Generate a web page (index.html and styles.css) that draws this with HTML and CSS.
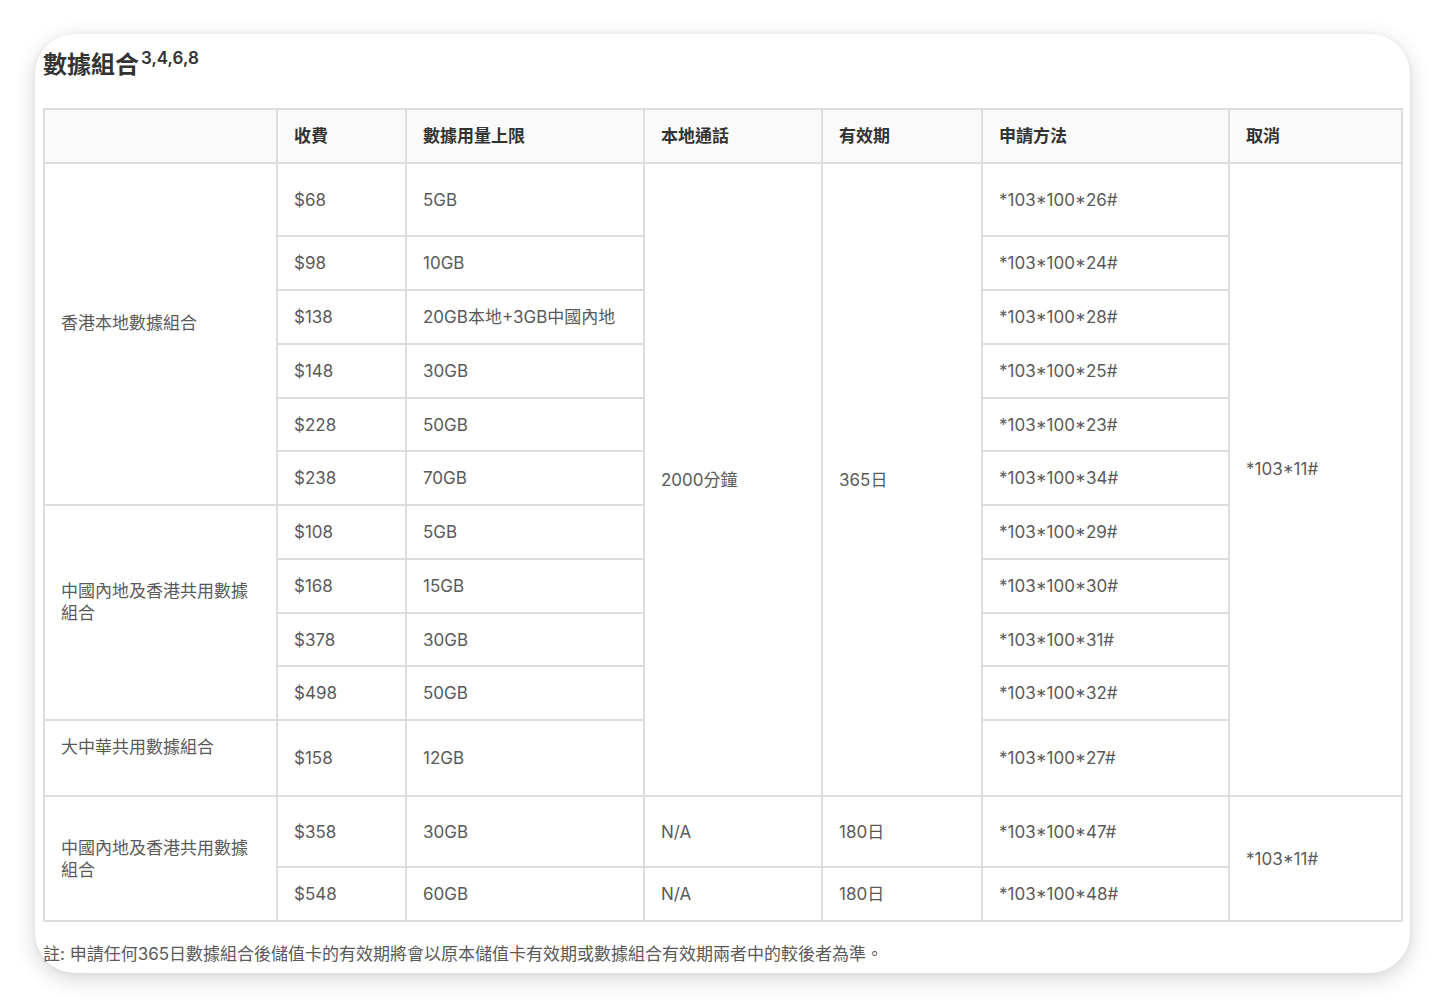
FILE: index.html
```html
<!DOCTYPE html>
<html lang="zh-Hant">
<head>
<meta charset="utf-8">
<title>數據組合</title>
<link rel="stylesheet" href="styles.css">
</head>
<body>
<div class="card">
  <h2 class="title">數據組合<sup>3,4,6,8</sup></h2>
  <table class="plans">
    <colgroup>
      <col class="c1"><col class="c2"><col class="c3"><col class="c4"><col class="c5"><col class="c6"><col class="c7">
    </colgroup>
    <thead>
      <tr class="h54">
        <th></th><th>收費</th><th>數據用量上限</th><th>本地通話</th><th>有效期</th><th>申請方法</th><th>取消</th>
      </tr>
    </thead>
    <tbody>
      <tr class="h73">
        <td rowspan="6" class="lift">香港本地數據組合</td>
        <td>$68</td><td>5GB</td>
        <td rowspan="11">2000分鐘</td>
        <td rowspan="11">365日</td>
        <td>*103*100*26#</td>
        <td rowspan="11" class="lift">*103*11#</td>
      </tr>
      <tr class="h54"><td>$98</td><td>10GB</td><td>*103*100*24#</td></tr>
      <tr class="h54"><td>$138</td><td>20GB本地+3GB中國內地</td><td>*103*100*28#</td></tr>
      <tr class="h54"><td>$148</td><td>30GB</td><td>*103*100*25#</td></tr>
      <tr class="h53"><td>$228</td><td>50GB</td><td>*103*100*23#</td></tr>
      <tr class="h54"><td>$238</td><td>70GB</td><td>*103*100*34#</td></tr>
      <tr class="h54">
        <td rowspan="4" class="lift">中國內地及香港共用數據組合</td>
        <td>$108</td><td>5GB</td><td>*103*100*29#</td>
      </tr>
      <tr class="h54"><td>$168</td><td>15GB</td><td>*103*100*30#</td></tr>
      <tr class="h53"><td>$378</td><td>30GB</td><td>*103*100*31#</td></tr>
      <tr class="h54"><td>$498</td><td>50GB</td><td>*103*100*32#</td></tr>
      <tr class="h76">
        <td class="lift">大中華共用數據組合</td>
        <td>$158</td><td>12GB</td><td>*103*100*27#</td>
      </tr>
      <tr class="h71">
        <td rowspan="2">中國內地及香港共用數據組合</td>
        <td>$358</td><td>30GB</td><td>N/A</td><td>180日</td><td>*103*100*47#</td>
        <td rowspan="2">*103*11#</td>
      </tr>
      <tr class="h54"><td>$548</td><td>60GB</td><td>N/A</td><td>180日</td><td>*103*100*48#</td></tr>
    </tbody>
  </table>
  <p class="note">註: 申請任何365日數據組合後儲值卡的有效期將會以原本儲值卡有效期或數據組合有效期兩者中的較後者為準。</p>
</div>
</body>
</html>
```
FILE: styles.css
```css
html, body {
  margin: 0;
  padding: 0;
  background: #ffffff;
}
body {
  font-family: "Inter", "Noto Sans CJK TC", sans-serif;
  color: #5a5a5a;
  width: 1445px;
  height: 1008px;
  overflow: hidden;
}
.card {
  box-sizing: border-box;
  margin: 34px 0 0 35px;
  width: 1375px;
  height: 939px;
  padding: 15px 8px 0 8px;
  background: #ffffff;
  border-radius: 40px;
  box-shadow: 0 6px 22px rgba(0, 0, 0, 0.16), 0 0 6px rgba(0, 0, 0, 0.06);
}
.title {
  margin: 0;
  font-size: 24px;
  line-height: 32px;
  font-weight: 700;
  color: #333333;
}
.title sup {
  font-size: 17px;
  font-weight: 600;
  vertical-align: 9px;
  line-height: 0;
  margin-left: 2px;
}
.plans {
  margin-top: 27px;
  width: 1358px;
  table-layout: fixed;
  border-collapse: collapse;
  font-size: 17px;
  line-height: 22px;
}
.c1 { width: 233px; }
.c2 { width: 129px; }
.c3 { width: 238px; }
.c4 { width: 178px; }
.c5 { width: 160px; }
.c6 { width: 247px; }
.c7 { width: 173px; }
.plans th,
.plans td {
  border: 2px solid #dddddd;
  padding: 0 16px;
  text-align: left;
  vertical-align: middle;
}
.plans th {
  background: #fafafa;
  color: #333333;
  font-weight: 700;
}
.plans td.lift {
  padding-bottom: 22px;
}
.h53 { height: 53px; }
.h54 { height: 54px; }
.h71 { height: 71px; }
.h73 { height: 73px; }
.h76 { height: 76px; }
.note {
  margin: 20px 0 0 0;
  font-size: 17px;
  line-height: 24px;
  color: #5a5a5a;
}
```
